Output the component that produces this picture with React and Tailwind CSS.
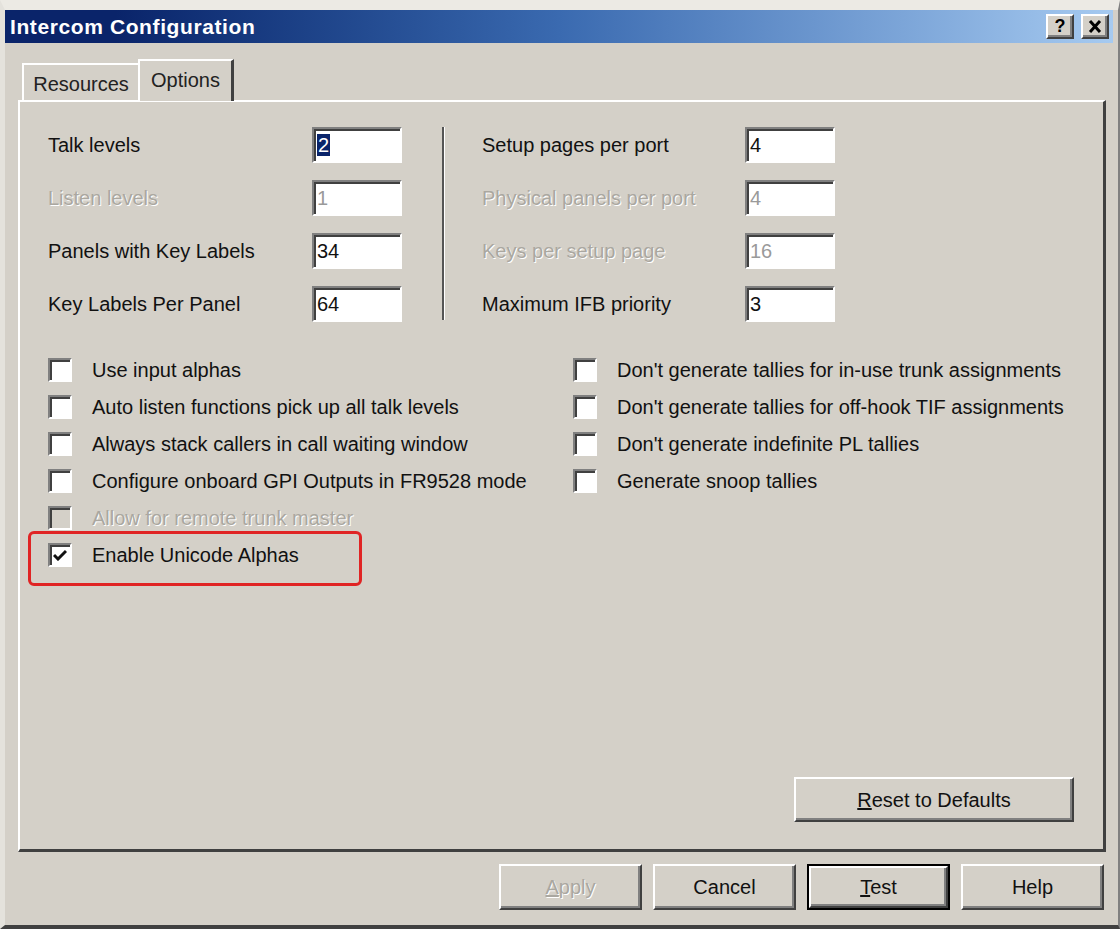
import React from 'react'

const raised =
  'border-2 border-t-white border-l-white border-r-[#404040] border-b-[#404040] shadow-[inset_-2px_-2px_0_#808080]'
const sunken =
  'border-2 border-t-[#808080] border-l-[#808080] border-r-white border-b-white shadow-[inset_2px_2px_0_#404040]'

const fieldsLeft = [
  { label: 'Talk levels', value: '2', selected: true },
  { label: 'Listen levels', value: '1', disabled: true },
  { label: 'Panels with Key Labels', value: '34' },
  { label: 'Key Labels Per Panel', value: '64' },
]
const fieldsRight = [
  { label: 'Setup pages per port', value: '4' },
  { label: 'Physical panels per port', value: '4', disabled: true },
  { label: 'Keys per setup page', value: '16', disabled: true },
  { label: 'Maximum IFB priority', value: '3' },
]

const checksLeft = [
  { label: 'Use input alphas' },
  { label: 'Auto listen functions pick up all talk levels' },
  { label: 'Always stack callers in call waiting window' },
  { label: 'Configure onboard GPI Outputs in FR9528 mode' },
  { label: 'Allow for remote trunk master', disabled: true },
  { label: 'Enable Unicode Alphas', checked: true, marked: true },
]
const checksRight = [
  { label: "Don't generate tallies for in-use trunk assignments" },
  { label: "Don't generate tallies for off-hook TIF assignments" },
  { label: "Don't generate indefinite PL tallies" },
  { label: 'Generate snoop tallies' },
]

const grayText = 'text-[#aaa7a0] [text-shadow:1px_1px_0_#ffffff]'

function Field({ f, labelW }) {
  return (
    <div className="flex items-center h-[36px]">
      <div className={`${labelW} ${f.disabled ? grayText : 'text-[#111]'}`}>{f.label}</div>
      <div className={`${sunken} w-[90px] h-[36px] bg-white flex items-center pl-[3px] ${f.disabled ? 'text-[#9a9a9a]' : 'text-[#111]'}`}>
        {f.selected ? <span className="bg-[#0a246a] text-white px-[1px] leading-[22px]">{f.value}</span> : f.value}
      </div>
    </div>
  )
}

function Check({ c }) {
  return (
    <div className="flex items-center h-[37px]">
      <div className={`${sunken} w-[24px] h-[24px] ${c.disabled ? 'bg-[#d4d0c8]' : 'bg-white'} flex items-center justify-center shrink-0`}>
        {c.checked && (
          <svg width="14" height="12" viewBox="0 0 14 12">
            <path d="M1 6 L5 10 L13 2" stroke="#111" strokeWidth="3" fill="none" />
          </svg>
        )}
      </div>
      <div className={`ml-[20px] whitespace-nowrap ${c.disabled ? grayText : 'text-[#111]'}`}>{c.label}</div>
    </div>
  )
}

function Btn({ children, className = '' }) {
  return (
    <div className={`${raised} bg-[#d4d0c8] flex items-center justify-center ${className}`}>{children}</div>
  )
}

export default function App() {
  return (
    <div
      className="w-[1120px] h-[929px] bg-[#d4d0c8] flex flex-col border-t-[10px] border-t-[#eceae4] border-l-[5px] border-l-[#e4e2dc] border-r-[2px] border-r-[#808080] border-b-[4px] border-b-[#404040] text-[20px]"
      style={{ fontFamily: '"Liberation Sans", Arial, sans-serif' }}
    >
      {/* title bar */}
      <div className="h-[33px] mr-[5px] flex items-center justify-between bg-gradient-to-r from-[#0a246a] from-10% via-[#3a6ab0] to-[#a6caf0]">
        <div className="text-white font-bold text-[21px] pl-[5px] tracking-[0.6px]">Intercom Configuration</div>
        <div className="flex gap-[7px] pr-[4px]">
          <Btn className="w-[28px] h-[25px] font-bold text-[18px] text-black">?</Btn>
          <Btn className="w-[28px] h-[25px]">
            <svg width="14" height="13" viewBox="0 0 14 13">
              <path d="M2 1 L12 12 M12 1 L2 12" stroke="#000" strokeWidth="3" />
            </svg>
          </Btn>
        </div>
      </div>

      {/* tabs */}
      <div className="flex items-end h-[57px] pl-[17px] pt-[15px]">
        <div className="h-[37px] w-[118px] border-t-2 border-l-2 border-t-white border-l-white border-r-2 border-r-[#808080] flex items-center justify-center text-[#222] pt-[2px]">
          Resources
        </div>
        <div className="h-[42px] w-[96px] -ml-[2px] border-t-2 border-l-2 border-t-white border-l-white border-r-[3px] border-r-[#404040] flex items-start justify-center pt-[4px] text-[#222] relative top-[1px] bg-[#d4d0c8] z-10">
          Options
        </div>
      </div>

      {/* tab panel */}
      <div className="ml-[13px] mr-[12px] h-[752px] border-t-2 border-l-2 border-t-white border-l-white border-r-[3px] border-r-[#404040] border-b-[3px] border-b-[#404040] flex flex-col pl-[28px] pt-[25px]">
        <div className="flex">
          <div className="flex flex-col gap-[17px]">
            {fieldsLeft.map((f) => (
              <Field key={f.label} f={f} labelW="w-[264px]" />
            ))}
          </div>
          <div className="ml-[40px] mr-[37px] w-[3px] h-[193px] bg-[#555] border-r border-r-white" />
          <div className="flex flex-col gap-[17px]">
            {fieldsRight.map((f) => (
              <Field key={f.label} f={f} labelW="w-[263px]" />
            ))}
          </div>
        </div>

        <div className="flex mt-[29px]">
          <div className="flex flex-col w-[525px]">
            {checksLeft.map((c) =>
              c.marked ? (
                <div key={c.label} className="relative">
                  <div className="absolute -left-[20px] top-[-5px] w-[334px] h-[55px] border-[3px] border-[#e02424] rounded-[6px]" />
                  <Check c={c} />
                </div>
              ) : (
                <Check key={c.label} c={c} />
              )
            )}
          </div>
          <div className="flex flex-col">
            {checksRight.map((c) => (
              <Check key={c.label} c={c} />
            ))}
          </div>
        </div>

        <div className="flex-1" />
        <div className="flex justify-end pr-[29px] pb-[27px]">
          <Btn className="w-[280px] h-[45px] text-[#111]">
            <span><u>R</u>eset to Defaults</span>
          </Btn>
        </div>
      </div>

      {/* dialog buttons */}
      <div className="flex justify-end gap-[11px] pr-[14px] pt-[12px]">
        <Btn className={`w-[143px] h-[46px] ${grayText}`}>
          <span><u>A</u>pply</span>
        </Btn>
        <Btn className="w-[143px] h-[46px] text-[#111]">Cancel</Btn>
        <div className="border-2 border-black">
          <Btn className="w-[139px] h-[42px] text-[#111]">
            <span><u>T</u>est</span>
          </Btn>
        </div>
        <Btn className="w-[143px] h-[46px] text-[#111]">Help</Btn>
      </div>
    </div>
  )
}
